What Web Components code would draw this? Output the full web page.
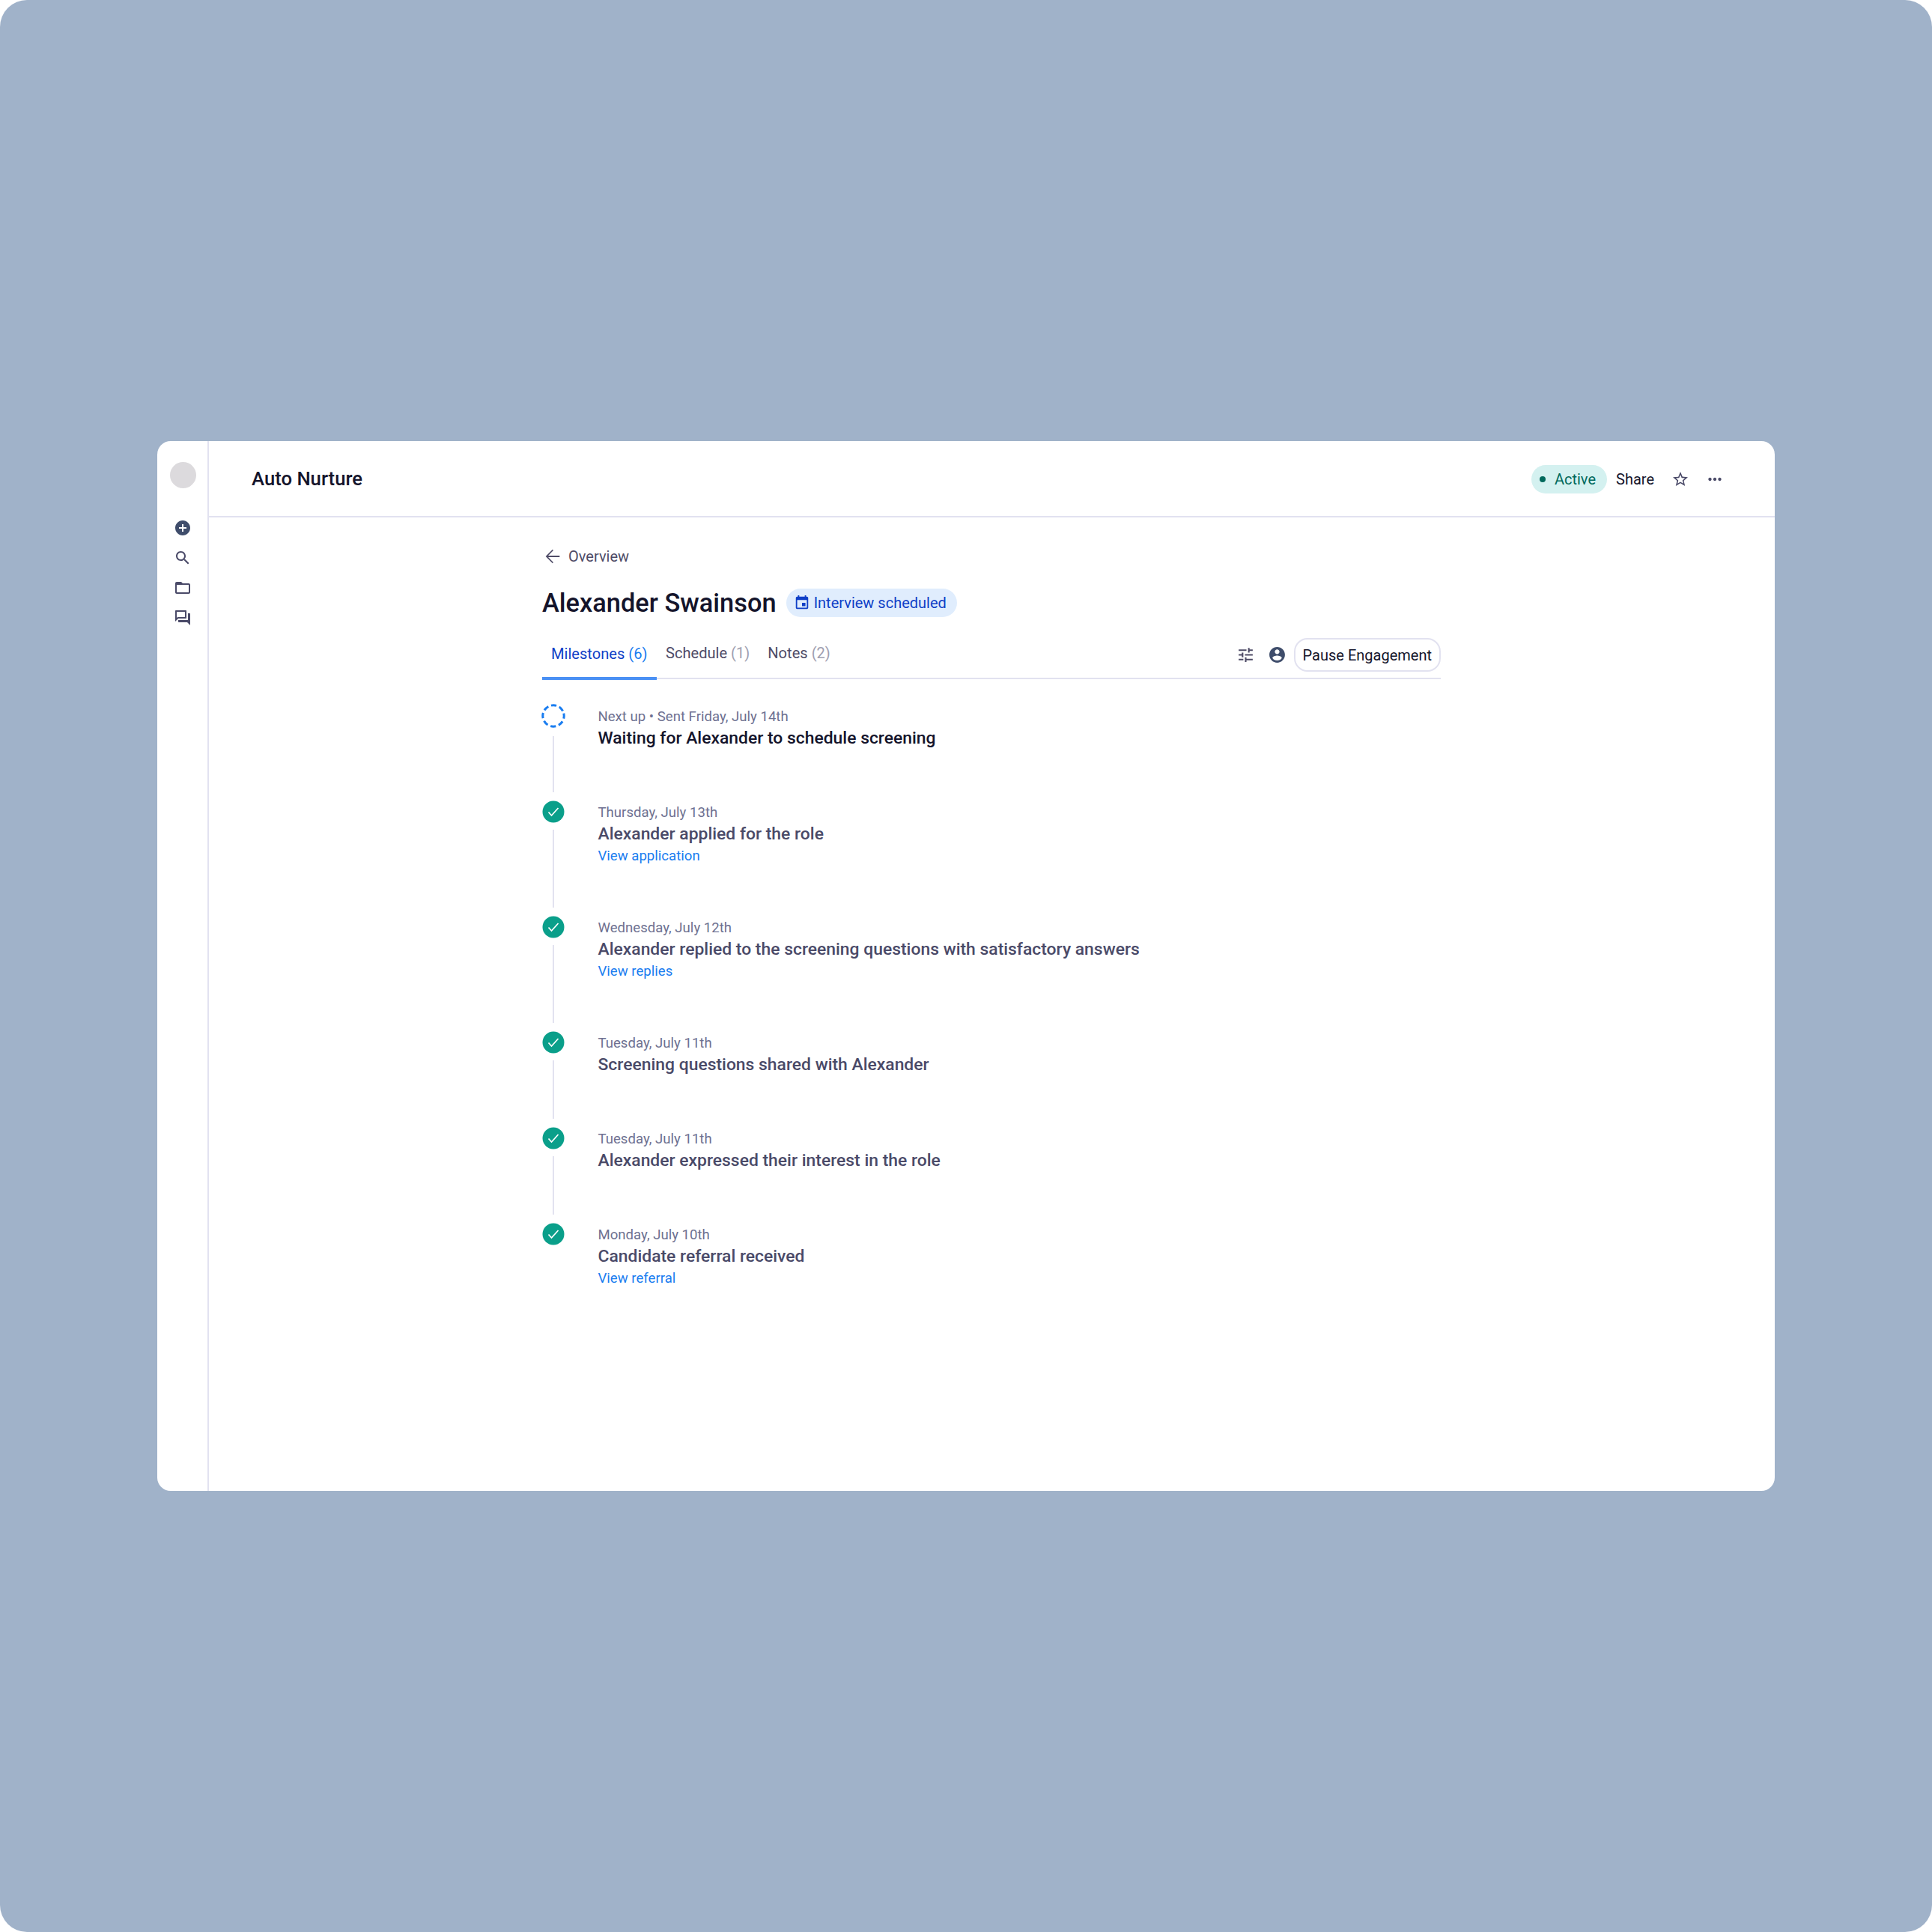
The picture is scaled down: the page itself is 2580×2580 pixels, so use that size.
<!DOCTYPE html>
<html>
<head>
<meta charset="utf-8">
<title>Auto Nurture</title>
<style>
  html, body { margin: 0; background: #fff; }
  body { font-family: Roboto, "Liberation Sans", sans-serif; }
</style>
</head>
<body>
<app-stage>
  <app-sidebar></app-sidebar>
  <app-header title="Auto Nurture"></app-header>
  <candidate-page>
    <milestone-row date="Next up • Sent Friday, July 14th" text="Waiting for Alexander to schedule screening" state="next"></milestone-row>
    <milestone-row date="Thursday, July 13th" text="Alexander applied for the role" link="View application"></milestone-row>
    <milestone-row date="Wednesday, July 12th" text="Alexander replied to the screening questions with satisfactory answers" link="View replies"></milestone-row>
    <milestone-row date="Tuesday, July 11th" text="Screening questions shared with Alexander"></milestone-row>
    <milestone-row date="Tuesday, July 11th" text="Alexander expressed their interest in the role"></milestone-row>
    <milestone-row date="Monday, July 10th" text="Candidate referral received" link="View referral" last></milestone-row>
  </candidate-page>
</app-stage>

<script>
(function () {
  const icons = {
    add: `<path d="M12 2C6.48 2 2 6.48 2 12s4.48 10 10 10 10-4.48 10-10S17.52 2 12 2zm5 11h-4v4h-2v-4H7v-2h4V7h2v4h4v2z"/>`,
    search: `<path d="M15.5 14h-.79l-.28-.27C15.41 12.59 16 11.11 16 9.5 16 5.91 13.09 3 9.5 3S3 5.91 3 9.5 5.91 16 9.5 16c1.61 0 3.09-.59 4.23-1.57l.27.28v.79l5 4.99L20.49 19l-4.99-5zm-6 0C7.01 14 5 11.99 5 9.5S7.01 5 9.5 5 14 7.01 14 9.5 11.99 14 9.5 14z"/>`,
    folder: `<path d="M20 6h-8l-2-2H4c-1.1 0-1.99.9-1.99 2L2 18c0 1.1.9 2 2 2h16c1.1 0 2-.9 2-2V8c0-1.1-.9-2-2-2zm0 12H4V8h16v10z"/>`,
    forum: `<path d="M15 4v7H5.17L4 12.17V4h11m1-2H3c-.55 0-1 .45-1 1v14l4-4h10c.55 0 1-.45 1-1V3c0-.55-.45-1-1-1zm5 4h-2v9H6v2c0 .55.45 1 1 1h11l4 4V7c0-.55-.45-1-1-1z"/>`,
    star: `<path d="M22 9.24l-7.19-.62L12 2 9.19 8.63 2 9.24l5.46 4.73L5.82 21 12 17.27 18.18 21l-1.63-7.03L22 9.24zM12 15.4l-3.76 2.27 1-4.28-3.32-2.88 4.38-.38L12 6.1l1.71 4.04 4.38.38-3.32 2.88 1 4.28L12 15.4z"/>`,
    more: `<path d="M6 10c-1.1 0-2 .9-2 2s.9 2 2 2 2-.9 2-2-.9-2-2-2zm12 0c-1.1 0-2 .9-2 2s.9 2 2 2 2-.9 2-2-.9-2-2-2zm-6 0c-1.1 0-2 .9-2 2s.9 2 2 2 2-.9 2-2-.9-2-2-2z"/>`,
    tune: `<path d="M3 17v2h6v-2H3zM3 5v2h10V5H3zm10 16v-2h8v-2h-8v-2h-2v6h2zM7 9v2H3v2h4v2h2V9H7zm14 4v-2H11v2h10zm-6-4h2V7h4V5h-4V3h-2v6z"/>`,
    account: `<path d="M12 2C6.48 2 2 6.48 2 12s4.48 10 10 10 10-4.48 10-10S17.52 2 12 2zm0 3c1.66 0 3 1.34 3 3s-1.34 3-3 3-3-1.34-3-3 1.34-3 3-3zm0 14.2c-2.5 0-4.71-1.28-6-3.22.03-1.99 4-3.08 6-3.08 1.99 0 5.97 1.09 6 3.08-1.29 1.94-3.5 3.22-6 3.22z"/>`,
    event: `<path d="M17 12h-5v5h5v-5zM16 1v2H8V1H6v2H5c-1.11 0-1.99.9-1.99 2L3 19c0 1.1.89 2 2 2h14c1.1 0 2-.9 2-2V5c0-1.1-.9-2-2-2h-1V1h-2zm3 18H5V8h14v11z"/>`,
    back: `<path d="M20 11.1H6.9l5.9-5.9L11.9 4 4 12l7.9 8 .9-1.2-5.9-5.9H20z"/>`
  };

  function icon(name, size, color) {
    return `<svg width="${size}" height="${size}" viewBox="0 0 24 24" fill="${color}" style="display:block;flex:none">${icons[name]}</svg>`;
  }

  class AppStage extends HTMLElement {
    constructor() {
      super();
      this.attachShadow({ mode: "open" }).innerHTML = `
        <style>
          :host { display: flex; align-items: center; justify-content: center; width: 2580px; height: 2580px; background: #a0b2c9; border-radius: 36px; }
          .card { width: 2160px; height: 1402px; background: #fff; border-radius: 18px; overflow: hidden; display: grid; grid-template-columns: 69px 1fr; grid-template-rows: 102px 1fr; }
          ::slotted(app-sidebar) { grid-row: 1 / 3; }
        </style>
        <div class="card"><slot></slot></div>`;
    }
  }

  class AppSidebar extends HTMLElement {
    constructor() {
      super();
      this.attachShadow({ mode: "open" }).innerHTML = `
        <style>
          :host { display: flex; flex-direction: column; align-items: center; border-right: 2px solid #e2e2f0; box-sizing: border-box; padding-top: 28px; }
          .avatar { width: 35px; height: 35px; border-radius: 50%; background: #dcdadd; margin-bottom: 41px; margin-left: 1px; }
          .nav { display: flex; flex-direction: column; gap: 16px; }
        </style>
        <div class="avatar"></div>
        <div class="nav">
          ${icon("add", 24, "#3f4d6b")}
          ${icon("search", 24, "#4a4a68")}
          ${icon("folder", 24, "#4a4a68")}
          ${icon("forum", 24, "#4a4a68")}
        </div>`;
    }
  }

  class AppHeader extends HTMLElement {
    constructor() {
      super();
      this.attachShadow({ mode: "open" }).innerHTML = `
        <style>
          :host { display: flex; align-items: center; box-sizing: border-box; border-bottom: 2px solid #e2e2f0; padding: 2px 67px 0 57px; }
          h1 { font: 500 25.7px/32px Roboto, sans-serif; color: #14142b; margin: -2px 0 0; flex: 1; }
          .pill { display: flex; align-items: center; height: 38px; padding: 0 15px 0 11px; border-radius: 19px; background: #d4f1f0; color: #00695c; font: 400 20px Roboto, sans-serif; }
          .dot { width: 8px; height: 8px; border-radius: 50%; background: #00695c; margin-right: 12px; }
          .share { font: 400 20px Roboto, sans-serif; color: #14142b; margin: 0 23px 0 12px; }
          .star { margin-right: 21px; }
        </style>
        <h1></h1>
        <div class="pill"><span class="dot"></span>Active</div>
        <span class="share">Share</span>
        <span class="star">${icon("star", 24, "#4a4a68")}</span>
        <span>${icon("more", 26, "#4a4a68")}</span>`;
      this.shadowRoot.querySelector("h1").textContent = this.getAttribute("title");
    }
  }

  class CandidatePage extends HTMLElement {
    constructor() {
      super();
      this.attachShadow({ mode: "open" }).innerHTML = `
        <style>
          :host { display: block; box-sizing: border-box; padding: 37px 0 0 445px; width: 1645px; }
          .back { display: flex; align-items: center; gap: 7px; height: 30px; font: 400 20px Roboto, sans-serif; color: #4e4b66; }
          .title { display: flex; align-items: center; gap: 13px; margin-top: 27px; }
          h2 { font: 500 34.4px/40px Roboto, sans-serif; color: #14142b; margin: 0; }
          .chip { display: flex; align-items: center; gap: 5px; height: 38px; padding: 0 14px 0 10px; border-radius: 19px; background: #e0edfd; color: #0f3fc7; font: 400 20px Roboto, sans-serif; }
          .tabs { display: flex; align-items: center; height: 82px; border-bottom: 2px solid #e2e2f0; width: 1200px; box-sizing: border-box; }
          .tab { box-sizing: border-box; height: 82px; padding: 32px 12px 0; font: 400 20.1px/32px Roboto, sans-serif; color: #4e4b66; white-space: pre; }
          .tab span { color: #a09fb1; }
          .tab.on { width: 153px; color: #0f3fc7; border-bottom: 4px solid #4a90f4; padding-right: 0; height: 83px; margin-bottom: -3px; }
          .tab.on span { color: #1a7df0; }
          .tools { margin-left: auto; display: flex; align-items: center; margin-top: 19px; }
          .tools svg { margin-right: 17px; }
          .tools svg + svg { margin-right: 10px; }
          .btn { box-sizing: border-box; height: 45px; padding: 0 10px; border: 2px solid #e2e2f0; border-radius: 18px; display: flex; align-items: center; font: 400 20px Roboto, sans-serif; color: #14142b; }
          .list { margin-top: 34px; }
        </style>
        <div class="back">${icon("back", 28, "#4e4b66")}Overview</div>
        <div class="title">
          <h2>Alexander Swainson</h2>
          <div class="chip">${icon("event", 22, "#0f3fc7")}Interview scheduled</div>
        </div>
        <div class="tabs">
          <div class="tab on">Milestones <span>(6)</span></div>
          <div class="tab">Schedule <span>(1)</span></div>
          <div class="tab">Notes <span>(2)</span></div>
          <div class="tools">
            ${icon("tune", 25, "#4e4b66")}
            ${icon("account", 25, "#3f4d6b")}
            <div class="btn">Pause Engagement</div>
          </div>
        </div>
        <div class="list"><slot></slot></div>`;
    }
  }

  class MilestoneRow extends HTMLElement {
    constructor() {
      super();
      const next = this.getAttribute("state") === "next";
      const link = this.getAttribute("link");
      const mark = next
        ? `<svg width="32" height="32" viewBox="0 0 32 32" style="display:block"><circle cx="16" cy="16" r="14.2" fill="none" stroke="#1a7df0" stroke-width="3" stroke-dasharray="7.2 3.95" transform="rotate(-14 16 16)"/></svg>`
        : `<svg width="30" height="30" viewBox="0 0 30 30" style="display:block"><circle cx="15" cy="15" r="14.5" fill="#0a9f8a"/><path d="M8.5 15.5l4 4.5 9-10" fill="none" stroke="#fff" stroke-width="1.7"/></svg>`;
      this.attachShadow({ mode: "open" }).innerHTML = `
        <style>
          :host { display: flex; min-height: 128px; }
          :host([link]) { min-height: 154px; }
          :host([last]) { min-height: 0; }
          .rail { width: 30px; display: flex; flex-direction: column; align-items: center; margin-right: 44.5px; }
          .mark { height: 30px; display: flex; align-items: center; }
          .line { flex: 1; width: 2px; background: #e2e2f0; margin: 9px 0 11px; }
          :host([state="next"]) .line { margin-top: 12px; }
          .date { font: 400 18.6px/25px Roboto, sans-serif; color: #6e7191; margin-top: 4px; }
          .text { font: 500 22.9px/33px Roboto, sans-serif; color: #4a4a68; margin-top: -1px; }
          :host([state="next"]) .text { color: #14142b; }
          a { display: block; font: 400 18.6px/26px Roboto, sans-serif; color: #1a7df0; text-decoration: none; }
        </style>
        <div class="rail">
          <div class="mark">${mark}</div>
          <div class="line"></div>
        </div>
        <div>
          <div class="date"></div>
          <div class="text"></div>
          ${link ? "<a></a>" : ""}
        </div>`;
      this.shadowRoot.querySelector(".date").textContent = this.getAttribute("date");
      this.shadowRoot.querySelector(".text").textContent = this.getAttribute("text");
      if (link) this.shadowRoot.querySelector("a").textContent = link;
      if (this.hasAttribute("last")) this.shadowRoot.querySelector(".line").style.display = "none";
    }
  }

  customElements.define("app-stage", AppStage);
  customElements.define("app-sidebar", AppSidebar);
  customElements.define("app-header", AppHeader);
  customElements.define("candidate-page", CandidatePage);
  customElements.define("milestone-row", MilestoneRow);
})();
</script>
</body>
</html>
